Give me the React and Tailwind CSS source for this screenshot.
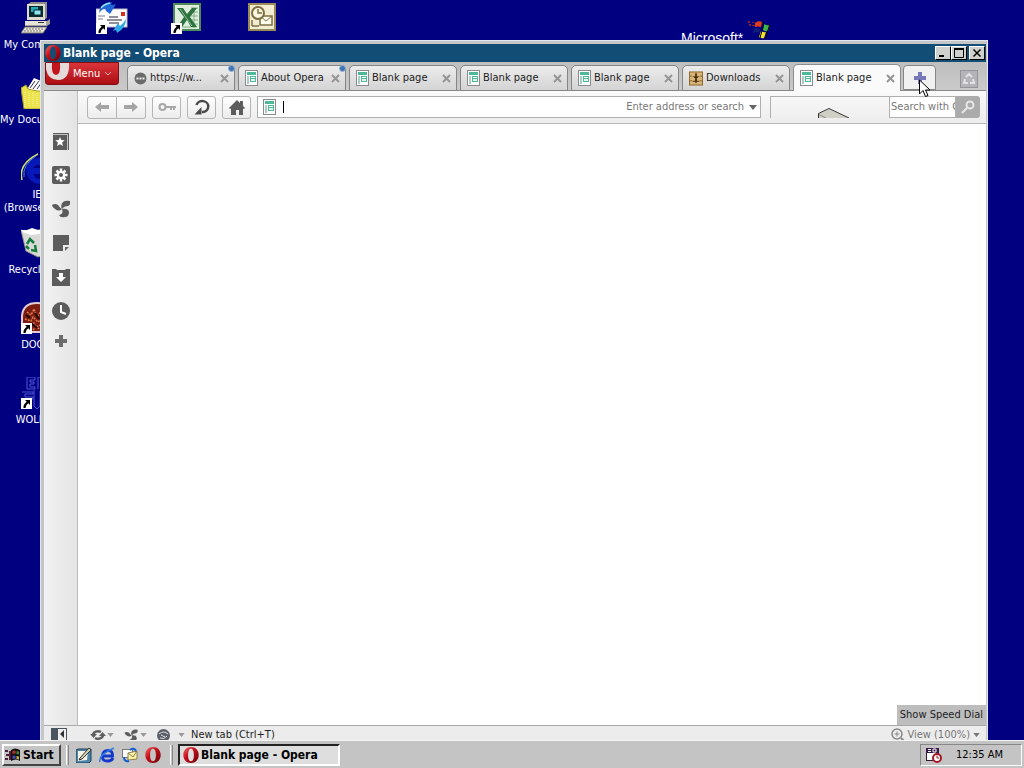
import React, { useState } from 'react';

const OperaLogo = ({ className }) => (
  <svg viewBox="0 0 16 16" className={className} aria-hidden="true">
    <defs>
      <linearGradient id="operaRed" x1="0" x2="1" y1="0" y2="1">
        <stop offset="0" stopColor="#f07070" />
        <stop offset="0.4" stopColor="#c8101c" />
        <stop offset="1" stopColor="#6a0008" />
      </linearGradient>
    </defs>
    <path
      fill="url(#operaRed)"
      fillRule="evenodd"
      d="M8 0C3.4 0 0.3 3.4 0.3 8S3.4 16 8 16s7.7-3.4 7.7-8S12.6 0 8 0zm0 1.8c2 0 2.9 2.6 2.9 6.2S10 14.2 8 14.2 5.1 11.600 5.100 8 6 1.800 8 1.800z"
    />
  </svg>
);

const PageIcon = () => (
  <svg viewBox="0 0 13 16" className="h-4 w-[13px] shrink-0" shapeRendering="crispEdges" aria-hidden="true">
    <rect x="0.500" y="0.500" width="12" height="15" fill="#fff" stroke="#8b8b8b" />
    <rect x="2" y="2" width="9" height="3" fill="#4fb89b" />
    <rect x="2" y="6" width="2" height="8" fill="#a9cfc4" />
    <rect x="5" y="6" width="6" height="6" fill="#4fb89b" />
    <rect x="6" y="7" width="4" height="1" fill="#fff" />
    <rect x="6" y="9" width="4" height="2" fill="#e4f4ee" />
  </svg>
);

const BubbleIcon = () => (
  <svg viewBox="0 0 13 13" className="h-[13px] w-[13px] shrink-0" aria-hidden="true">
    <circle cx="6.500" cy="6.500" r="6" fill="#6b6b6b" />
    <path d="M2.500 5.500h2v2h-2zM5.500 5.500h2v2h-2zM8.500 5.500h2v2h-2z" fill="#eee" />
  </svg>
);

const DownloadsIcon = () => (
  <svg viewBox="0 0 15 15" className="h-[15px] w-[14px] shrink-0" aria-hidden="true">
    <rect x="0.500" y="0.500" width="14" height="14" fill="#d9b57a" stroke="#8a6428" />
    <path d="M0.500 5h3M11.500 5h3M0.500 10h3M11.500 10h3" stroke="#8a6428" />
    <path d="M6.500 2h2v3H11L7.500 8.500 4 5h2.500zM4 10h7v1H4zM6.500 8h2v4h-2z" fill="#4d3510" />
  </svg>
);

const CloseIcon = ({ className }) => (
  <svg viewBox="0 0 9 9" className={className} aria-hidden="true">
    <path d="M1 1l7 7M8 1L1 8" stroke="currentColor" strokeWidth="2" />
  </svg>
);

const Caret = ({ className }) => (
  <svg viewBox="0 0 8 5" className={className} aria-hidden="true">
    <path d="M0 0h8L4 5z" fill="currentColor" />
  </svg>
);

const ShortcutArrow = () => (
  <>
    <rect x="0" y="21" width="11" height="11" fill="#fff" />
    <path d="M4 23h5v5l-1.700-1.700Q4.500 28 4.500 31H2.500Q2 27.500 5.700 24.700z" fill="#000" />
  </>
);

const ComputerIcon = () => (
  <svg viewBox="0 0 32 32" className="h-8 w-8" aria-hidden="true">
    <path d="M7 2l3-2h16v16l-3 2z" fill="#8d8d85" />
    <rect x="6" y="2" width="18" height="16" fill="#dedbd0" />
    <rect x="8" y="4" width="14" height="11" fill="#0a2a30" />
    <path d="M10 5h7v5h-7z" fill="#24a9b5" />
    <path d="M13 8h7v5h-7z" fill="#8fe6ee" stroke="#0a2a30" />
    <path d="M4 19h22l3-2v5l-3 2H4z" fill="#a5a39a" />
    <rect x="4" y="19" width="21" height="4" fill="#e6e3d8" />
    <path d="M17 20h6v1h-6z" fill="#333" />
    <path d="M4 25h22l-4 6H0z" fill="#e8e5da" stroke="#77756c" />
    <path d="M5 27h17M3 29h18" stroke="#77756c" strokeDasharray="2 1" />
  </svg>
);

const MailIcon = () => (
  <svg viewBox="0 0 32 32" className="h-8 w-8" aria-hidden="true">
    <rect x="0" y="7" width="31" height="18" fill="#fff" stroke="#b9b9c6" />
    <path d="M3 11Q4 1 16 0l-1 3q3 0 5-1l-6 10-4-3-1-3q-3 1-6 5z" fill="#1f66d8" />
    <path d="M5 6q3-4 9-5" stroke="#8fe2ff" strokeWidth="1.500" fill="none" />
    <rect x="25" y="10" width="4" height="4" fill="#d3301f" />
    <path d="M2 14h7M2 17h5" stroke="#7a7a90" />
    <path d="M13 15h9M11 18h15M13 21h10" stroke="#202038" />
    <path d="M30 17q0 9-9 14l-1-3-3 1 5-8 2 3q3-2 6-7z" fill="#31a8e6" />
    <ShortcutArrow />
  </svg>
);

const ExcelIcon = () => (
  <svg viewBox="0 0 32 32" className="h-8 w-8" aria-hidden="true">
    <rect x="3" y="2" width="26" height="26" fill="#dfeedd" stroke="#4f8a58" strokeWidth="2" />
    <path d="M20 6h7M20 10h7M20 14h7M20 18h7M20 22h7M23 5v21M6 25h20" stroke="#7fb086" />
    <path d="M6 6h6l4 6 5-6h5l-7 9 7 10h-6l-4-7-5 7H6l7-10z" fill="#2d7340" />
    <path d="M9 7l12 17" stroke="#8cc096" />
    <ShortcutArrow />
  </svg>
);

const OutlookIcon = () => (
  <svg viewBox="0 0 32 32" className="h-8 w-8" aria-hidden="true">
    <rect x="3" y="2" width="26" height="26" fill="#f1ecd2" stroke="#9a8c58" strokeWidth="2" />
    <rect x="14" y="14" width="12" height="9" fill="#fffdf0" stroke="#7c6f42" strokeWidth="1.500" />
    <path d="M14 14l6 5 6-5" fill="none" stroke="#7c6f42" />
    <circle cx="12" cy="11" r="6" fill="#fbf7df" stroke="#7c6f42" strokeWidth="2" />
    <path d="M12 7v4h4M6 24v-6M6 24h7" fill="none" stroke="#7c6f42" strokeWidth="1.500" />
  </svg>
);

const DocumentsIcon = () => (
  <svg viewBox="0 0 32 32" className="h-8 w-8" aria-hidden="true">
    <path d="M5 14l8-13 12 5 3 9-4 5H7z" fill="#fff" />
    <path d="M9 11l5-7M12 12l6-8M16 12l5-7M20 12l4-5" stroke="#33334a" />
    <path d="M0 11l5-3 2 4 9 2h16v14l-3 4H3z" fill="#ece34c" stroke="#a39a28" />
    <path d="M4 15v15M8 16v14M12 16v14M16 16v14" stroke="#f9f5a8" strokeDasharray="1 1" />
  </svg>
);

const ExplorerIcon = () => (
  <svg viewBox="0 0 32 32" className="h-8 w-8" aria-hidden="true">
    <path d="M31 16A13 13 0 1 0 29 26H20q-6 3-7-4h18z" fill="#0618b8" />
    <path d="M12 16q4-6 11 0z" fill="#000080" />
    <path d="M1 28Q-3 12 17 2" stroke="#d4e070" strokeWidth="1.500" fill="none" />
    <path d="M3 25Q1 13 15 4" stroke="#3f8fdd" fill="none" />
  </svg>
);

const RecycleIcon = () => (
  <svg viewBox="0 0 32 32" className="h-8 w-8" aria-hidden="true">
    <path d="M0 3l9 3 8-3 15 2-5 22-10 3-12-6z" fill="#d9d9d5" stroke="#94948e" />
    <path d="M0 3l6 0 5-2 6 2 6-1-4 5-9 1-9-3z" fill="#fff" />
    <g fill="none" stroke="#167c3d" strokeWidth="2.500">
      <path d="M6 17l3-5 4 4" />
      <path d="M14 18l1 6-5-1" />
      <path d="M8 22l-3-3" />
    </g>
  </svg>
);

const DoomIcon = () => (
  <svg viewBox="0 0 32 32" className="h-8 w-8" aria-hidden="true">
    <path d="M1 30V14Q2 1 16 1t15 13v16z" fill="#7a1c10" stroke="#e3cbd3" strokeWidth="2" />
    <path
      d="M6 10l4 3 3-6 3 8 4-6M4 17l6 2 2-4 5 5 5-4M6 23l7-2 2 4 6-3M12 28l3-3 5 3"
      stroke="#dc7a4f"
      strokeWidth="1.500"
      strokeDasharray="2 1"
      fill="none"
    />
    <path d="M5 13l4 3M14 11l4 6M10 21l6 5" stroke="#1c0503" strokeWidth="2" />
    <ShortcutArrow />
  </svg>
);

const WolfIcon = () => (
  <svg viewBox="0 0 32 32" className="h-8 w-8" aria-hidden="true">
    <g fill="none" stroke="#4c55d8">
      <path d="M6 0h8v3H9v2h4v2H9v3h5v2H6zM17 12V0h9M19 5h5" />
      <path d="M1 15h11v2H4v3h8v2H3M13 13v16l3 3 3-3V14M19 18h9v4h-9M24 14v14" />
    </g>
    <ShortcutArrow />
  </svg>
);

const WindowsFlag = ({ className }) => (
  <svg viewBox="0 0 22 20" className={className} aria-hidden="true">
    <path d="M0 1h2v2H0zM1 4h2v2H1zM4 2h2v1H4zM4 5h3v1H4z" fill="#8b1e30" />
    <path d="M7 3q3-3 7-1l-1 5q-3-1-6 0z" fill="#e23a1c" />
    <path d="M16 4q3 2 6 1l-2 6q-3 1-5-1z" fill="#3db54a" />
    <path d="M6 9q3-2 6 0l-1 4q-3-2-6 0z" fill="#10207a" />
    <path d="M13 11q3 2 5 1l-2 6q-2 1-5-1z" fill="#f4e52c" />
    <path d="M14 2l2 1-4 15M22 4l-5 15" stroke="#000" fill="none" />
  </svg>
);

const desktopIcons = [
  { label: 'My Computer', icon: <ComputerIcon /> },
  { label: 'My Documents', icon: <DocumentsIcon /> },
  { label: 'IE\n(Browser 5.5)', icon: <ExplorerIcon /> },
  { label: 'Recycle Bin', icon: <RecycleIcon /> },
  { label: 'DOOM', icon: <DoomIcon /> },
  { label: 'WOLF3D', icon: <WolfIcon /> },
];

const tabs = [
  { title: 'https://w...', icon: <BubbleIcon />, unread: true },
  { title: 'About Opera', icon: <PageIcon />, unread: true },
  { title: 'Blank page', icon: <PageIcon /> },
  { title: 'Blank page', icon: <PageIcon /> },
  { title: 'Blank page', icon: <PageIcon /> },
  { title: 'Downloads', icon: <DownloadsIcon /> },
  { title: 'Blank page', icon: <PageIcon /> },
];

const panels = [
  {
    name: 'Bookmarks',
    art: (
      <>
        <path d="M1 1h16v17H1z" fill="#5c5c5c" />
        <path d="M1 2.500h14.500V18" fill="none" stroke="#c4c4c4" />
        <path d="M8 5l1.300 3 3.400.3-2.600 2.200.8 3.400L8 12.200l-2.900 1.700.8-3.400-2.600-2.200 3.400-.3z" fill="#fff" />
      </>
    ),
  },
  {
    name: 'Widgets',
    art: (
      <>
        <rect width="18" height="18" rx="2" fill="#5c5c5c" />
        <g stroke="#fff" strokeWidth="2.500">
          <path d="M9 2.500v13M2.500 9h13M4.500 4.500l9 9M13.500 4.500l-9 9" />
        </g>
        <circle cx="9" cy="9" r="4" fill="#fff" />
        <circle cx="9" cy="9" r="2" fill="#5c5c5c" />
      </>
    ),
  },
  {
    name: 'Unite',
    art: (
      <g fill="#5c5c5c">
        <path d="M0 5q3-2 6 0 2 3 4 4-3 3-7 0-3-2-3-4z" />
        <path d="M10 9Q8 5 11 2q3-2 7-1 1 4-2 5-4 0-6 3z" />
        <path d="M10 9q6-1 7 3 0 5-4 5-5 1-6-2 5-1 3-6z" />
      </g>
    ),
  },
  {
    name: 'Notes',
    art: (
      <>
        <path d="M1 1h16v10h-6v6H1z" fill="#5c5c5c" />
        <path d="M13 13h4l-4 4z" fill="#666" />
      </>
    ),
  },
  {
    name: 'Downloads',
    art: (
      <>
        <path d="M0 1h4l1 1h8l1-1h4v17H0z" fill="#5c5c5c" />
        <path d="M7 5h4v4h3l-5 5-5-5h3z" fill="#fff" />
      </>
    ),
  },
  {
    name: 'History',
    art: (
      <>
        <circle cx="9" cy="9" r="9" fill="#5c5c5c" />
        <path d="M9 3v7l5 2" fill="none" stroke="#fff" strokeWidth="2" />
      </>
    ),
  },
  {
    name: 'Add panel',
    art: <path d="M7 3h4v4h4v4h-4v4H7v-4H3V7h4z" fill="#6c6c6c" />,
  },
];

const DesktopIcon = ({ icon, label }) => (
  <div className="flex h-[75px] w-[74px] flex-col items-center pt-[2px] text-white">
    {icon}
    {label && <span className="mt-1 text-center leading-[13px] whitespace-pre">{label}</span>}
  </div>
);

const CaptionButton = ({ label, children }) => (
  <button
    aria-label={label}
    className="flex h-[14px] w-4 items-center justify-center border border-t-white border-r-black border-b-black border-l-white bg-[#d0d0cc]"
  >
    <svg viewBox="0 0 10 10" className="h-[10px] w-[10px]" fill="none" stroke="#000">
      {children}
    </svg>
  </button>
);

const Tab = ({ tab, active, onSelect }) => (
  <div
    className={
      active
        ? 'relative flex h-[27px] w-[108px] items-center rounded-t-[5px] border border-b-0 border-[#8d8d8d] bg-[#fafafa]'
        : 'relative flex h-[26px] w-[108px] items-center rounded-t-[5px] border border-[#858585] bg-linear-to-b from-[#ececec] to-[#d4d4d4]'
    }
  >
    <button onClick={onSelect} className="flex min-w-0 flex-1 items-center gap-[3px] pl-[6px] text-left">
      {tab.icon}
      <span className="whitespace-nowrap">{tab.title}</span>
    </button>
    <button aria-label="Close tab" className="mr-[5px] text-[#959595]">
      <CloseIcon className="h-[9px] w-[9px]" />
    </button>
    {tab.unread && (
      <span className="absolute -top-px -right-px h-[7px] w-[7px] rounded-full border border-[#8fb2d8] bg-[#3f73b3]" />
    )}
  </div>
);

const ToolButton = ({ label, className = 'w-[29px] rounded-[3px] border', children }) => (
  <button
    aria-label={label}
    className={`${className} flex h-[23px] items-center justify-center border-[#b5b5b5] bg-linear-to-b from-white to-[#ececec]`}
  >
    {children}
  </button>
);

const Toolbar = () => (
  <div className="flex h-[33px] items-center border-b border-[#b8b8b8] bg-linear-to-b from-[#fafafa] to-[#ededed] pr-[6px] pl-[9px]">
    <div className="mr-[6px] flex">
      <ToolButton label="Back" className="w-[30px] rounded-l-[3px] border">
        <svg viewBox="0 0 16 12" className="h-3 w-4">
          <path d="M1 6l6-5v3h8v4H7v3z" fill="#a5a5a5" />
        </svg>
      </ToolButton>
      <ToolButton label="Forward" className="w-[29px] rounded-r-[3px] border border-l-0">
        <svg viewBox="0 0 16 12" className="h-3 w-4">
          <path d="M15 6L9 1v3H1v4h8v3z" fill="#a5a5a5" />
        </svg>
      </ToolButton>
    </div>
    <div className="mr-[6px] flex gap-[6px]">
      <ToolButton label="Wand">
        <svg viewBox="0 0 18 10" className="h-[10px] w-[18px]" fill="none" stroke="#a8a8a8" strokeWidth="2">
          <circle cx="4.500" cy="5" r="3" />
          <path d="M8 5h10M13 6v2M16 6v2" />
        </svg>
      </ToolButton>
      <ToolButton label="Reload">
        <svg viewBox="0 0 18 18" className="h-[18px] w-[18px]" fill="none">
          <path d="M3.500 7A6 5.500 0 1 1 9 14" stroke="#4a4a4a" strokeWidth="2.500" />
          <path d="M8.500 9v7.500H1.500z" fill="#4a4a4a" />
        </svg>
      </ToolButton>
      <ToolButton label="Home">
        <svg viewBox="0 0 16 15" className="h-[15px] w-4">
          <path d="M8 0l3 3V1h3v5l2 2-1 1-1-.500V15h-4v-5H7v5H2V8.500L1 9 0 8z" fill="#5c5c5c" />
        </svg>
      </ToolButton>
    </div>
    <div className="flex h-[22px] flex-1 items-center border border-[#b0b0b0] bg-white pr-[3px] pl-[5px]">
      <PageIcon />
      <span className="ml-[7px] h-3 w-px bg-black" />
      <input
        aria-label="Address"
        placeholder="Enter address or search"
        className="min-w-0 flex-1 pr-[5px] text-right outline-none placeholder:text-[#777]"
      />
      <button aria-label="Address history" className="text-[#666]">
        <Caret className="h-[5px] w-2" />
      </button>
    </div>
    <div className="ml-[9px] flex h-[22px] w-[119px] items-end justify-center border-t border-l border-[#b0b0b0] pl-2">
      <svg viewBox="0 0 34 11" className="h-[11px] w-[34px]" aria-hidden="true">
        <path d="M1 11V7l11-5 20 9z" fill="#d0d0c6" />
        <path d="M1 7l8 4" stroke="#8a8a80" />
        <path d="M1.500 11V6.500L12 1.500 32 11" fill="none" stroke="#333" />
      </svg>
    </div>
    <div className="flex h-[22px]">
      <input
        aria-label="Search"
        placeholder="Search with Google"
        className="w-[67px] border border-[#b0b0b0] bg-white pl-px outline-none placeholder:text-[#777]"
      />
      <button aria-label="Go" className="flex w-6 items-center justify-center rounded-r-[3px] bg-[#ababab]">
        <svg viewBox="0 0 16 14" className="h-[14px] w-4" fill="none" stroke="#e8e8e8" strokeWidth="2">
          <circle cx="10" cy="5" r="3.500" />
          <path d="M7 8l-5 5" />
        </svg>
      </button>
    </div>
  </div>
);

const StatusBar = () => (
  <div className="flex h-[15px] items-start overflow-hidden border-t border-[#a9a9a9] bg-[#ececec] pl-[7px] leading-[18px]">
    <button aria-label="Toggle panels" className="mt-[2px]">
      <svg viewBox="0 0 16 14" className="h-[14px] w-4">
        <path d="M0 0h16v14H0z" fill="#4b5560" />
        <path d="M7 1h8v13H7z" fill="#eee" />
        <path d="M13 2v8L9 6z" fill="#333" />
      </svg>
    </button>
    <div className="ml-[23px] flex h-[18px] items-center text-[#999]">
      <button aria-label="Synchronize" className="flex items-center gap-px">
        <svg viewBox="0 0 16 12" className="h-3 w-4" fill="none">
          <path d="M3 6a5 4 0 0 1 8-3M13 6a5 4 0 0 1-8 3" stroke="#606060" strokeWidth="2.500" />
          <path d="M0 5h7L3.500 9zM16 7H9l3.500-4z" fill="#606060" />
        </svg>
        <Caret className="h-1 w-[7px]" />
      </button>
      <button aria-label="Unite" className="ml-[10px] flex items-center gap-[2px]">
        <svg viewBox="0 0 18 18" className="h-[13px] w-[14px]">
          {panels[2].art}
        </svg>
        <Caret className="h-1 w-[7px]" />
      </button>
      <button aria-label="Turbo" className="ml-[10px] flex items-center gap-2">
        <svg viewBox="0 0 13 13" className="h-[13px] w-[13px]">
          <circle cx="6.500" cy="6.500" r="6.500" fill="#5b606a" />
          <path d="M2 5q5-4 9 0M3 9q4 2 7-2M4 6l4 2" stroke="#ddd" fill="none" />
        </svg>
        <Caret className="h-1 w-[7px]" />
      </button>
    </div>
    <span className="ml-[6px] text-[#222]">New tab (Ctrl+T)</span>
    <button className="mr-[6px] ml-auto flex items-center gap-[2px] text-[#777]">
      <svg viewBox="0 0 14 14" className="h-[14px] w-[14px]" fill="none" stroke="#888">
        <circle cx="6" cy="6" r="5" strokeWidth="1.500" />
        <path d="M3.500 6h5M6 3.500v5" />
        <path d="M10 10l4 4" strokeWidth="2" />
      </svg>
      View (100%)
      <Caret className="ml-px h-1 w-[7px]" />
    </button>
  </div>
);

const BrowserWindow = () => {
  const [current, setCurrent] = useState(6);

  return (
    <div className="absolute top-10 right-9 bottom-0 left-10 flex flex-col border-x border-t border-[#e2e6ee] bg-[#c6c6c6] pt-[3px] pr-px pl-[3px]">
      {/* Title bar */}
      <div className="flex h-[18px] items-center bg-[#114d74] px-px text-white">
        <OperaLogo className="h-4 w-4" />
        <h1 className="ml-[2px] flex-1 text-[12px] leading-[16px] font-bold">Blank page - Opera</h1>
        <div className="flex">
          <CaptionButton label="Minimize">
            <path d="M1 8h5" strokeWidth="2" />
          </CaptionButton>
          <CaptionButton label="Maximize">
            <path d="M.5 1.500h9v8h-9z" />
            <path d="M0 1h10" strokeWidth="2" />
          </CaptionButton>
          <span className="w-[2px]" />
          <CaptionButton label="Close">
            <path d="M1.500 1.500l7 7M8.500 1.500l-7 7" strokeWidth="1.500" />
          </CaptionButton>
        </div>
      </div>

      {/* Menu and tabs */}
      <div className="flex h-[29px] items-end border-b border-[#8a8a8a] bg-linear-to-b from-[#bebebe] to-[#cacaca] pl-px">
        <button className="mr-2 flex h-[23px] w-[74px] items-center self-start overflow-hidden rounded-b-[3px] border border-[#7f0f14] bg-linear-to-b from-[#d9343a] to-[#ad0a12] text-white">
          <svg viewBox="0 0 25 21" className="h-[21px] w-[25px]" aria-hidden="true">
            <path d="M0 0h23q1 17-11 17Q2 17 0 6z" fill="#e4dada" />
            <path d="M6 0h8q1 12-4 12T6 0z" fill="#c3141d" />
          </svg>
          <span className="ml-[2px]">Menu</span>
          <svg viewBox="0 0 8 5" className="ml-1 h-[5px] w-2" fill="none" stroke="#eaa">
            <path d="M1 1l3 3 3-3" />
          </svg>
        </button>
        <div className="-mb-px flex items-end gap-[3px]">
          {tabs.map((tab, i) => (
            <Tab key={i} tab={tab} active={i === current} onSelect={() => setCurrent(i)} />
          ))}
        </div>
        <button
          aria-label="New tab"
          className="relative ml-[2px] flex h-[25px] w-[33px] items-center justify-center rounded-t-[4px] border border-[#858585] bg-[#f1f1f1]"
        >
          <svg viewBox="0 0 12 12" className="h-3 w-3">
            <path d="M4 0h4v4h4v4H8v4H4V8H0V4h4z" fill="#7778ba" />
          </svg>
          <svg viewBox="0 0 12 20" className="absolute top-[13px] left-[15px] z-10 h-5 w-3">
            <path d="M.5 1v14l3.500-3.500 2.500 6 2.500-1-2.500-5.500H11z" fill="#fff" stroke="#000" />
          </svg>
        </button>
        <button aria-label="Closed tabs" className="mr-2 mb-[2px] ml-auto">
          <svg viewBox="0 0 18 18" className="h-[18px] w-[18px]" fill="none">
            <rect x="0.500" y="0.500" width="17" height="17" fill="#b4b4b8" stroke="#94949a" />
            <path d="M6 7l3-3 3 3M13 9l1 4h-4M8 13H4l1-4" stroke="#e2e2e6" strokeWidth="2" />
          </svg>
        </button>
      </div>

      <div className="flex min-h-0 flex-1">
        {/* Panel selector */}
        <nav className="flex w-[34px] flex-col items-center gap-4 border-r border-[#bdbdbd] bg-linear-to-r from-[#f2f2f2] to-[#e4e4e4] pt-[41px]">
          {panels.map((p) => (
            <button key={p.name} aria-label={p.name} className="last:-mt-1">
              <svg viewBox="0 0 18 18" className="h-[18px] w-[18px]">
                {p.art}
              </svg>
            </button>
          ))}
        </nav>
        <main className="flex min-w-0 flex-1 flex-col">
          <Toolbar />
          <div className="flex flex-1 items-end justify-end bg-white">
            <div className="bg-[#bdbdbd] px-[3px] py-[3px] leading-[14px] text-[#222]">Show Speed Dial</div>
          </div>
        </main>
      </div>
      <StatusBar />
    </div>
  );
};

const Taskbar = () => (
  <footer className="flex h-7 items-center border-t border-[#f4f4f4] bg-[#c4c4c4] px-[2px] pt-px text-black">
    <button className="flex h-[22px] w-[59px] items-center gap-[2px] border-2 border-t-white border-r-[#444] border-b-[#444] border-l-white pl-px text-[12px] font-bold">
      <svg viewBox="0 0 16 14" className="h-[14px] w-4 shrink-0">
        <path d="M0 2h3v2H0zM1 6h3v2H1zM0 10h3v2H0zM4 3h2v9H4z" fill="#50203a" />
        <path d="M6 2q4-3 9 0v11q-4-3-9 0z" fill="#111" />
        <path d="M7.500 3q2-1 3 0v3q-1-1-3 0z" fill="#b5362c" />
        <path d="M11.500 3l2.500.5v3L11.500 6z" fill="#3d8a44" />
        <path d="M7.500 8q2-1 3 0v3q-1-1-3 0z" fill="#4550b8" />
        <path d="M11.500 8l2.500.5v3l-2.500-.5z" fill="#c3b340" />
      </svg>
      Start
    </button>
    <span className="ml-[5px] h-5 w-[3px] border-x border-l-white border-r-[#888]" />
    <div className="ml-[7px] flex items-center gap-[7px]">
      <button aria-label="Show desktop">
        <svg viewBox="0 0 16 16" className="h-4 w-4">
          <path d="M0 3l2-1h13v12l-2 2H0z" fill="#4d86ad" stroke="#1d3c58" />
          <path d="M2 4h10l-1 9-9 1z" fill="#f6f3e4" />
          <path d="M4 11l9-10 2 2-9 9-3 1z" fill="#d9d3b0" stroke="#333" />
        </svg>
      </button>
      <button aria-label="Internet Explorer">
        <svg viewBox="0 0 16 16" className="h-4 w-4">
          <path d="M4 9h9.500Q14 3.500 9 3.500T3.500 9t5.500 5q3.500 0 5-3" fill="none" stroke="#1538cc" strokeWidth="3" />
          <path d="M1 15Q-1 8 15 1" fill="none" stroke="#2f7fe0" strokeWidth="1.500" />
        </svg>
      </button>
      <button aria-label="Outlook Express">
        <svg viewBox="0 0 16 16" className="h-4 w-4">
          <rect x="0.500" y="2.500" width="10" height="8" fill="#fff" stroke="#777" />
          <path d="M6 6l9-2v8l-9 1z" fill="#fff3a8" stroke="#8a8050" />
          <path d="M6 6l5 4 4-6" fill="none" stroke="#8a8050" />
          <path d="M8 3q4-3 6 1M7 14q-5 1-5-4" fill="none" stroke="#1560cf" strokeWidth="2" />
        </svg>
      </button>
      <button aria-label="Opera">
        <OperaLogo className="h-4 w-4" />
      </button>
    </div>
    <span className="ml-[9px] h-5 w-[3px] border-x border-l-white border-r-[#888]" />
    <button className="ml-[5px] flex h-[22px] w-[162px] items-center gap-[2px] border-2 border-t-[#222] border-r-white border-b-white border-l-[#222] bg-[#dedede] pl-[3px] text-[12px] font-bold">
      <OperaLogo className="h-4 w-4" />
      Blank page - Opera
    </button>
    <div className="ml-auto flex h-[22px] w-[102px] items-center border border-t-[#888] border-r-white border-b-white border-l-[#888] pl-[4px]">
      <svg viewBox="0 0 17 16" className="h-4 w-[17px]" aria-hidden="true">
        <rect x="1.500" y="1.500" width="12" height="12" fill="#fff" stroke="#3a1838" />
        <path d="M1 1h13v5H1z" fill="#3a1848" />
        <path d="M3 2.500h3M3 4.500h3M8 2h3v3H8z" stroke="#fff" fill="none" />
        <circle cx="12" cy="11" r="4" fill="#fff" stroke="#a31728" strokeWidth="2" />
        <path d="M12 8.500V11h2" fill="none" stroke="#a31728" />
      </svg>
      <time className="ml-[14px]">12:35 AM</time>
    </div>
  </footer>
);

const App = () => (
  <div className="flex h-screen flex-col overflow-hidden bg-[#000080] font-['DejaVu_Sans_Condensed','DejaVu_Sans',sans-serif] text-[11px] leading-[14px] text-[#222]">
    <div className="relative min-h-0 flex-1">
      <div className="flex gap-px">
        <div className="flex flex-col">
          {desktopIcons.map((item) => (
            <DesktopIcon key={item.label} {...item} />
          ))}
        </div>
        <DesktopIcon icon={<MailIcon />} />
        <DesktopIcon icon={<ExcelIcon />} />
        <DesktopIcon icon={<OutlookIcon />} />
      </div>

      {/* Wallpaper logo */}
      <div className="absolute top-5 left-[681px] flex items-start text-white">
        <span className="pt-[11px] font-['Liberation_Sans',sans-serif] text-[14px]">Microsoft*</span>
        <WindowsFlag className="ml-[5px] h-5 w-[22px]" />
      </div>

      <BrowserWindow />
    </div>
    <Taskbar />
  </div>
);

export default App;
